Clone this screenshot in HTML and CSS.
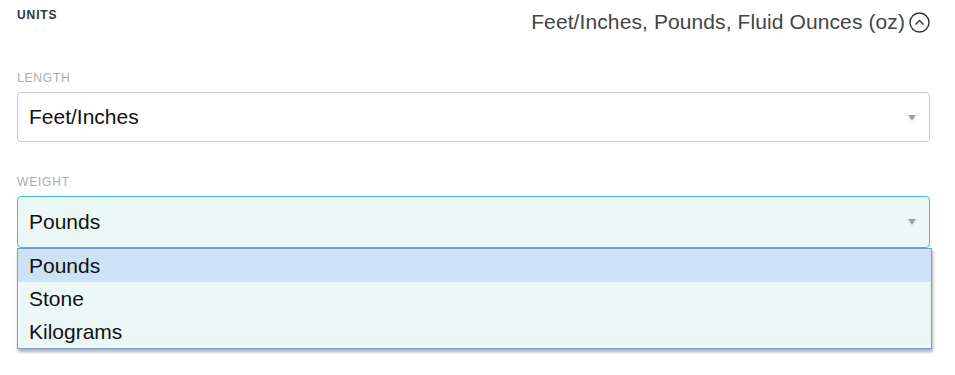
FILE: index.html
```html
<!DOCTYPE html>
<html lang="en">
<head>
  <meta charset="UTF-8" />
  <title>Units</title>
  <link rel="stylesheet" href="styles.css">
</head>
<body>
  <section class="units">
    <div class="units-head">
      <h3 class="units-title">UNITS</h3>
      <div class="units-summary">
        <span>Feet/Inches, Pounds, Fluid Ounces (oz)</span>
        <svg class="toggle-icon" width="21" height="21" viewBox="0 0 21 21">
          <circle cx="10.5" cy="10.5" r="9.5" fill="none" stroke="#333" stroke-width="1.4" />
          <path d="M6.5 12.5 L10.5 8.5 L14.5 12.5" fill="none" stroke="#333" stroke-width="1.4" />
        </svg>
      </div>
    </div>

    <div class="field">
      <label class="field-label">LENGTH</label>
      <div class="select">
        <span>Feet/Inches</span>
        <span class="arrow"></span>
      </div>
    </div>

    <div class="field">
      <label class="field-label">WEIGHT</label>
      <div class="select-wrap">
        <div class="select open">
          <span>Pounds</span>
          <span class="arrow"></span>
        </div>
        <ul class="options">
          <li class="active">Pounds</li>
          <li>Stone</li>
          <li>Kilograms</li>
        </ul>
      </div>
    </div>
  </section>
</body>
</html>
```

FILE: styles.css
```css
body {
  margin: 0;
  background-color: white;
  color: #222;
  font-family: "Liberation Sans", Arial, sans-serif;
}

.units {
  padding: 0 25px 0 17px;
}

.units-head {
  display: flex;
  justify-content: space-between;
  align-items: flex-start;
  height: 71px;
}

.units-title {
  margin: 8px 0 0;
  font-size: 12px;
  line-height: 14px;
  font-weight: 700;
  color: #2e3440;
  letter-spacing: 0.9px;
}

.units-summary {
  display: flex;
  align-items: center;
  gap: 4px;
  margin-top: 10px;
  font-size: 21px;
  letter-spacing: 0.1px;
  color: #444;
}

.toggle-icon {
  display: block;
}

.field {
  margin-bottom: 33px;
}

.field-label {
  display: block;
  font-size: 12px;
  line-height: 14px;
  color: #aaa;
  margin-bottom: 7px;
  letter-spacing: 0.8px;
}

.select {
  position: relative;
  height: 48px;
  display: flex;
  align-items: center;
  padding: 0 11px;
  border: 1px solid #ccc;
  border-radius: 4px;
  font-size: 21px;
  color: #111;
}

.select.open {
  height: 50px;
  border-color: #3fc1bb;
  background-color: #ecf8f7;
}

.arrow {
  position: absolute;
  right: 13px;
  top: 22px;
  border-left: 4px solid transparent;
  border-right: 4px solid transparent;
  border-top: 6px solid #a0a0a0;
}

.select-wrap {
  position: relative;
}

.options {
  list-style: none;
  margin: 0 -2px 0 0;
  padding: 0;
  border: 1px solid #7a9bd6;
  background-color: #ecf8f8;
  box-shadow: 1px 3px 3px rgba(0, 0, 0, 0.3);
}

.options li {
  height: 33px;
  line-height: 33px;
  padding-left: 11px;
  font-size: 21px;
  color: #111;
}

.options li.active {
  background-color: #cce2f7;
}
```
